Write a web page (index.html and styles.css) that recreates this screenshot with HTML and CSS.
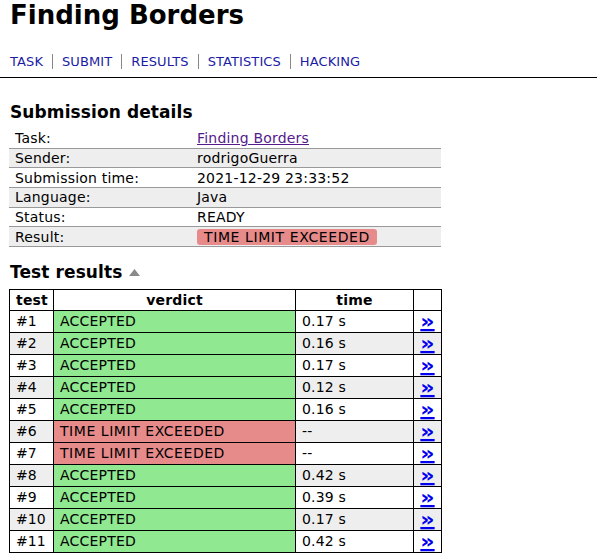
FILE: index.html
```html
<!DOCTYPE html>
<html>
<head>
<meta charset="utf-8">
<link rel="stylesheet" href="styles.css">
</head>
<body>
<div class="header">
  <h1 class="title">Finding Borders</h1>
  <nav class="nav">
    <a class="nav-item" href="#">TASK</a><a class="nav-item" href="#">SUBMIT</a><a class="nav-item" href="#">RESULTS</a><a class="nav-item" href="#">STATISTICS</a><a class="nav-item last" href="#">HACKING</a>
  </nav>
</div>
<hr class="rule">
<div class="content">
  <h2 class="section-title">Submission details</h2>
  <table class="details">
    <tr><td class="key">Task:</td><td><a class="task-link" href="#">Finding Borders</a></td></tr>
    <tr class="alt"><td class="key">Sender:</td><td>rodrigoGuerra</td></tr>
    <tr><td class="key">Submission time:</td><td>2021-12-29 23:33:52</td></tr>
    <tr class="alt"><td class="key">Language:</td><td>Java</td></tr>
    <tr><td class="key">Status:</td><td>READY</td></tr>
    <tr class="alt"><td class="key">Result:</td><td><span class="badge tle">TIME LIMIT EXCEEDED</span></td></tr>
  </table>

  <h2 class="section-title results-title">Test results <svg class="caret" width="11" height="7" viewBox="0 0 11 7"><polygon points="5.5,0 11,7 0,7" fill="#8a8a8a"/></svg></h2>
  <table class="tests">
    <colgroup><col class="w-test"><col class="w-verdict"><col class="w-time"><col class="w-link"></colgroup>
    <tr><th>test</th><th>verdict</th><th>time</th><th></th></tr>
    <tr><td>#1</td><td class="ac">ACCEPTED</td><td>0.17 s</td><td class="c-link"><a href="#">»</a></td></tr>
    <tr class="alt"><td>#2</td><td class="ac">ACCEPTED</td><td>0.16 s</td><td class="c-link"><a href="#">»</a></td></tr>
    <tr><td>#3</td><td class="ac">ACCEPTED</td><td>0.17 s</td><td class="c-link"><a href="#">»</a></td></tr>
    <tr class="alt"><td>#4</td><td class="ac">ACCEPTED</td><td>0.12 s</td><td class="c-link"><a href="#">»</a></td></tr>
    <tr><td>#5</td><td class="ac">ACCEPTED</td><td>0.16 s</td><td class="c-link"><a href="#">»</a></td></tr>
    <tr class="alt"><td>#6</td><td class="tl">TIME LIMIT EXCEEDED</td><td>--</td><td class="c-link"><a href="#">»</a></td></tr>
    <tr><td>#7</td><td class="tl">TIME LIMIT EXCEEDED</td><td>--</td><td class="c-link"><a href="#">»</a></td></tr>
    <tr class="alt"><td>#8</td><td class="ac">ACCEPTED</td><td>0.42 s</td><td class="c-link"><a href="#">»</a></td></tr>
    <tr><td>#9</td><td class="ac">ACCEPTED</td><td>0.39 s</td><td class="c-link"><a href="#">»</a></td></tr>
    <tr class="alt"><td>#10</td><td class="ac">ACCEPTED</td><td>0.17 s</td><td class="c-link"><a href="#">»</a></td></tr>
    <tr><td>#11</td><td class="ac">ACCEPTED</td><td>0.42 s</td><td class="c-link"><a href="#">»</a></td></tr>
  </table>
</div>
</body>
</html>
```

FILE: styles.css
```css
html, body {
  margin: 0;
  padding: 0;
  background: #fff;
  color: #000;
  font-family: "DejaVu Sans", Verdana, sans-serif;
  font-size: 14px;
  letter-spacing: 0.2px;
}

.header {
  padding: 0 10px;
}

.title {
  margin: 0;
  font-size: 26px;
  line-height: 30px;
  font-weight: bold;
  letter-spacing: 0;
}

.nav {
  margin-top: 23px;
  display: flex;
  align-items: center;
  height: 16px;
  font-size: 13px;
  letter-spacing: 0.1px;
}

.nav-item {
  color: #1b1ba3;
  text-decoration: none;
  padding: 0 9px;
  border-right: 1px solid #888;
  line-height: 15px;
}

.nav-item:first-child {
  padding-left: 0;
}

.nav-item.last {
  border-right: none;
}

.rule {
  margin: 8px 0 0 0;
  border: none;
  border-top: 1px solid #000;
  height: 0;
}

.content {
  padding: 0 9px;
}

.section-title {
  margin: 24px 0 0 1px;
  font-size: 17px;
  line-height: 20px;
  font-weight: bold;
  letter-spacing: 0.1px;
}

.details {
  margin-top: 7px;
  width: 432px;
  border-collapse: collapse;
}

.details td {
  padding: 0 6px;
  height: 18.7px;
  line-height: 18px;
  border-bottom: 1px solid #999;
}

.details tr.alt td {
  background: #eee;
}

.details td.key {
  width: 170px;
}

.task-link {
  color: #551a8b;
  text-decoration: underline;
}

.badge {
  display: inline-block;
  padding: 0 7px;
  border-radius: 3px;
  line-height: 16px;
  letter-spacing: 0.6px;
}

.badge.tle {
  background: #e68a8a;
}

.results-title {
  margin-top: 15px;
}

.caret {
  vertical-align: 2px;
  margin-left: 1px;
}

.tests {
  margin-top: 7px;
  width: 432px;
  border-collapse: collapse;
  table-layout: fixed;
}

.w-test { width: 44px; }
.w-verdict { width: 242px; }
.w-time { width: 118px; }
.w-link { width: 28px; }

.tests th, .tests td {
  border: 1px solid #000;
  padding: 0 6px;
  height: 21px;
  line-height: 21px;
  text-align: left;
  white-space: nowrap;
}

.tests th {
  height: 20px;
  line-height: 20px;
  text-align: center;
  font-weight: bold;
}

.tests tr.alt td {
  background: #eee;
}

.tests td.ac,
.tests tr.alt td.ac {
  background: #90e890;
}

.tests td.tl,
.tests tr.alt td.tl {
  background: #e68a8a;
  letter-spacing: 0.55px;
}

.tests td:first-child {
  letter-spacing: 0;
  padding-right: 2px;
}

.tests .c-link {
  text-align: center;
  padding: 0;
  line-height: 0;
}

.c-link a {
  display: inline-block;
  vertical-align: top;
  height: 21px;
  color: #0000ee;
  font-weight: bold;
  font-size: 17px;
  line-height: 21px;
  letter-spacing: 0;
  text-decoration: underline;
  text-decoration-thickness: 2px;
  transform: scale(1.3, 1.15);
}
```
